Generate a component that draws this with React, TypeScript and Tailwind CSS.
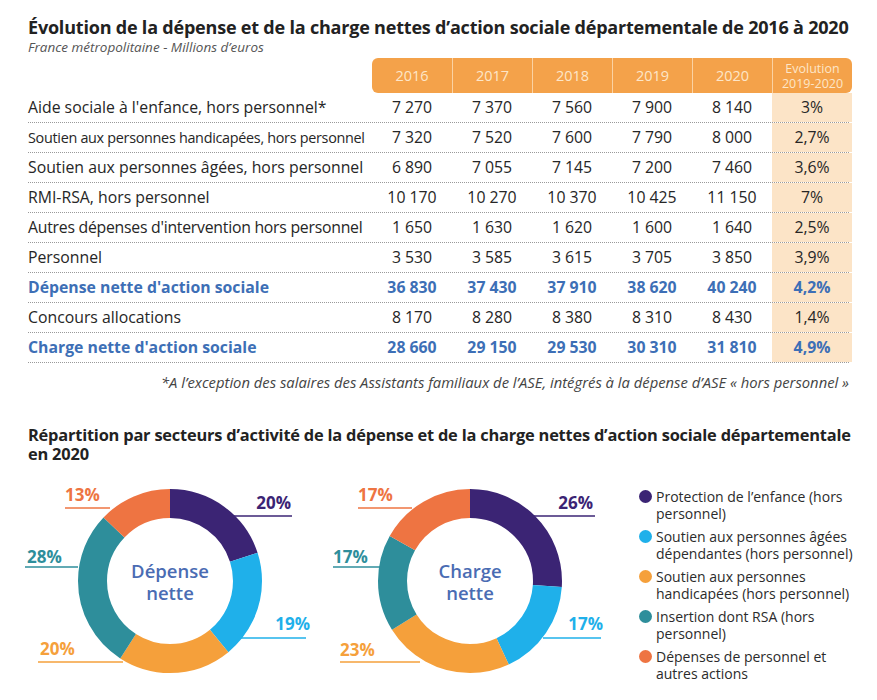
import React from "react";

const rows = [
  { label: "Aide sociale à l'enfance, hors personnel*", v: ["7 270", "7 370", "7 560", "7 900", "8 140"], e: "3%" },
  { label: "Soutien aux personnes handicapées, hors personnel", v: ["7 320", "7 520", "7 600", "7 790", "8 000"], e: "2,7%", small: true },
  { label: "Soutien aux personnes âgées, hors personnel", v: ["6 890", "7 055", "7 145", "7 200", "7 460"], e: "3,6%" },
  { label: "RMI-RSA, hors personnel", v: ["10 170", "10 270", "10 370", "10 425", "11 150"], e: "7%" },
  { label: "Autres dépenses d'intervention hors personnel", v: ["1 650", "1 630", "1 620", "1 600", "1 640"], e: "2,5%", tight: true },
  { label: "Personnel", v: ["3 530", "3 585", "3 615", "3 705", "3 850"], e: "3,9%" },
  { label: "Dépense nette d'action sociale", v: ["36 830", "37 430", "37 910", "38 620", "40 240"], e: "4,2%", bold: true },
  { label: "Concours allocations", v: ["8 170", "8 280", "8 380", "8 310", "8 430"], e: "1,4%" },
  { label: "Charge nette d'action sociale", v: ["28 660", "29 150", "29 530", "30 310", "31 810"], e: "4,9%", bold: true },
];

const C = {
  purple: "#3b2474",
  blue: "#1fb0ea",
  orange: "#f5a03b",
  teal: "#2e8e9b",
  red: "#ee7442",
};

type Label = { text: string; color: string; tx: number; ty: number; anchor: "start" | "end"; x1: number; x2: number; ly: number };

function Donut({ values, center, labels }: { values: number[]; center: [string, string]; labels: Label[] }) {
  const r = 77.5;
  const circ = 2 * Math.PI * r;
  const colors = [C.purple, C.blue, C.orange, C.teal, C.red];
  let acc = 0;
  return (
    <div className="relative w-[300px] h-[220px] shrink-0">
      <svg width="300" height="220" viewBox="0 0 300 220">
        {labels.map((l, i) => (
          <line key={"l" + i} x1={l.x1} x2={l.x2} y1={l.ly} y2={l.ly} stroke={l.color} strokeWidth="1.5" />
        ))}
        <g transform="rotate(-90 150 101)">
          {values.map((v, i) => {
            const len = (v / 100) * circ;
            const el = (
              <circle
                key={i}
                cx="150"
                cy="101"
                r={r}
                fill="none"
                stroke={colors[i]}
                strokeWidth="29"
                strokeDasharray={`${len} ${circ - len}`}
                strokeDashoffset={-acc}
              />
            );
            acc += len;
            return el;
          })}
        </g>
        {labels.map((l, i) => (
          <text key={"t" + i} x={l.tx} y={l.ty} textAnchor={l.anchor} fill={l.color} fontSize="17" fontWeight="700" fontFamily="'Open Sans', sans-serif">
            {l.text}
          </text>
        ))}
      </svg>
      <div className="absolute left-[100px] top-[80px] w-[100px] flex flex-col items-center text-[18.5px] leading-[22px] font-semibold text-[#4a6cb3]">
        <span>{center[0]}</span>
        <span>{center[1]}</span>
      </div>
    </div>
  );
}

const legend = [
  { color: C.purple, lines: ["Protection de l’enfance (hors", "personnel)"] },
  { color: C.blue, lines: ["Soutien aux personnes âgées", "dépendantes (hors personnel)"] },
  { color: C.orange, lines: ["Soutien aux personnes", "handicapées (hors personnel)"] },
  { color: C.teal, lines: ["Insertion dont RSA (hors", "personnel)"] },
  { color: C.red, lines: ["Dépenses de personnel et", "autres actions"] },
];

export default function App() {
  return (
    <div className="w-[877px] h-[700px] bg-white overflow-hidden font-['Open_Sans',sans-serif] text-[#2b2b2b]">
      <div className="px-[28px] pt-[15px]">
        <h1 className="text-[18px] leading-[24px] font-bold text-[#222] whitespace-nowrap tracking-[-0.2px]">
          Évolution de la dépense et de la charge nettes d’action sociale départementale de 2016 à 2020
        </h1>
        <p className="text-[13.5px] leading-[16px] italic text-[#555]">France métropolitaine - Millions d’euros</p>

        <div className="mt-[3px]">
          <div className="grid grid-cols-[344px_repeat(6,80px)] h-[35px]">
            <div />
            {["2016", "2017", "2018", "2019", "2020"].map((y, i) => (
              <div
                key={y}
                className={`bg-[#f4a24a] text-[#fde6c8] text-[14.5px] font-medium flex items-center justify-center ${i === 0 ? "rounded-l-[6px]" : "border-l border-[#fbd2a2]"}`}
              >
                {y}
              </div>
            ))}
            <div className="bg-[#f4a24a] text-[#fde6c8] text-[12.5px] leading-[15px] font-medium flex flex-col items-center justify-center rounded-r-[6px] border-l border-[#fbd2a2]">
              <span>Evolution</span>
              <span>2019-2020</span>
            </div>
          </div>
          {rows.map((r) => (
            <div
              key={r.label}
              className={`grid grid-cols-[344px_repeat(6,80px)] h-[30px] border-b border-dotted border-[#9a9a9a] text-[15.8px] ${r.bold ? "font-bold text-[#3d6fb6]" : "text-[#262626]"}`}
            >
              <div
                className={`flex items-center whitespace-nowrap ${r.small ? "text-[14.4px] tracking-[-0.3px]" : ""} ${r.tight ? "tracking-[-0.25px]" : ""}`}
              >
                {r.label}
              </div>
              {r.v.map((v, i) => (
                <div key={i} className="flex items-center justify-center whitespace-nowrap">
                  {v}
                </div>
              ))}
              <div className="flex items-center justify-center bg-[#fce4c7]">{r.e}</div>
            </div>
          ))}
        </div>

        <p className="mt-[10px] text-[14.8px] leading-[18px] italic text-[#444] text-right whitespace-nowrap">
          *A l’exception des salaires des Assistants familiaux de l’ASE, intégrés à la dépense d’ASE « hors personnel »
        </p>

        <h2 className="mt-[34px] text-[16.4px] leading-[19px] font-bold text-[#222] tracking-[-0.2px]">
          <span className="whitespace-nowrap">Répartition par secteurs d’activité de la dépense et de la charge nettes d’action sociale départementale</span>
          <br />
          en 2020
        </h2>
      </div>

      <div className="flex items-start mt-[17px] pl-[20px]">
        <Donut
          values={[20, 19, 20, 28, 13]}
          center={["Dépense", "nette"]}
          labels={[
            { text: "20%", color: C.purple, tx: 271, ty: 29, anchor: "end", x1: 213, x2: 272, ly: 36 },
            { text: "19%", color: C.blue, tx: 290, ty: 150, anchor: "end", x1: 220, x2: 286, ly: 158 },
            { text: "20%", color: C.orange, tx: 20, ty: 175, anchor: "start", x1: 18, x2: 103, ly: 182 },
            { text: "28%", color: C.teal, tx: 7, ty: 83, anchor: "start", x1: 5, x2: 58, ly: 87 },
            { text: "13%", color: C.red, tx: 45, ty: 21, anchor: "start", x1: 45, x2: 90, ly: 28 },
          ]}
        />
        <Donut
          values={[26, 17, 23, 17, 17]}
          center={["Charge", "nette"]}
          labels={[
            { text: "26%", color: C.purple, tx: 273, ty: 29, anchor: "end", x1: 213, x2: 275, ly: 36 },
            { text: "17%", color: C.blue, tx: 283, ty: 150, anchor: "end", x1: 223, x2: 281, ly: 158 },
            { text: "23%", color: C.orange, tx: 20, ty: 176, anchor: "start", x1: 20, x2: 100, ly: 182 },
            { text: "17%", color: C.teal, tx: 13, ty: 83, anchor: "start", x1: 13, x2: 60, ly: 87 },
            { text: "17%", color: C.red, tx: 38, ty: 21, anchor: "start", x1: 38, x2: 92, ly: 28 },
          ]}
        />
        <div className="ml-[19px] mt-[8px] flex flex-col gap-[6px]">
          {legend.map((l) => (
            <div key={l.lines[0]} className="flex items-start gap-[4px]">
              <span className="w-[13px] h-[13px] rounded-full mt-[2px] shrink-0" style={{ backgroundColor: l.color }} />
              <div className="text-[14px] leading-[17px] text-[#2b2b2b]">
                <div className="whitespace-nowrap">{l.lines[0]}</div>
                <div className="whitespace-nowrap">{l.lines[1]}</div>
              </div>
            </div>
          ))}
        </div>
      </div>
    </div>
  );
}
